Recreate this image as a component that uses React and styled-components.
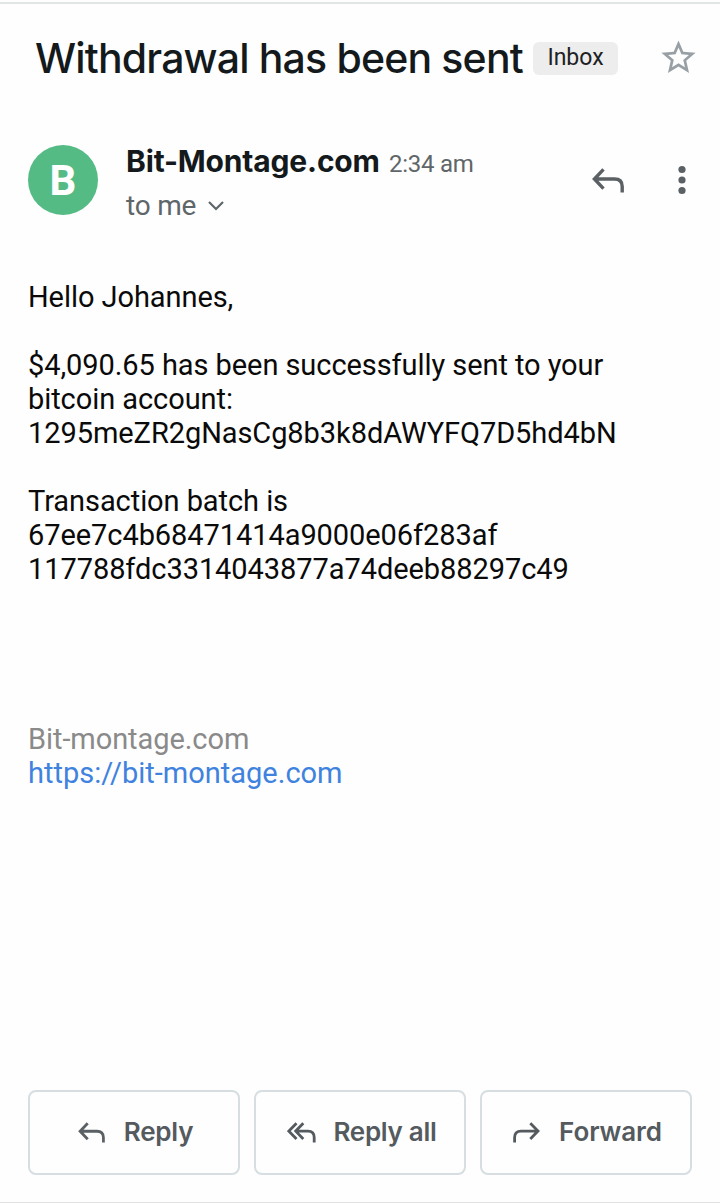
import styled, {createGlobalStyle} from "styled-components";
import {MdStarBorder} from "react-icons/md";

const GlobalStyle = createGlobalStyle`
    * {
        box-sizing: border-box;
    }

    body {
        margin: 0;
        background: #fefefe;
        font-family: Roboto, "Liberation Sans", sans-serif;
    }
`

const Page = styled.div`
    display: flex;
    flex-direction: column;
    height: 1203px;
    padding: 0 28px 27px;
    border-bottom: 1px solid #dfe1e2;
`

const TopLine = styled.hr`
    flex: none;
    height: 2px;
    margin: 2px -28px 0;
    border: 0;
    background: #e2e5e6;
`

const SubjectRow = styled.header`
    display: flex;
    align-items: center;
    height: 60px;
    margin-top: 24px;
    padding-left: 7px;
`

const Subject = styled.h1`
    flex: none;
    margin: 0;
    width: 498px;
    font: 500 41px/58px Inter, sans-serif;
    letter-spacing: -0.83px;
    white-space: nowrap;
    color: #14191c;
`

const Badge = styled.span`
    flex: none;
    width: 85px;
    height: 33px;
    margin-right: 40px;
    border-radius: 6px;
    background: #ededed;
    font-size: 23px;
    line-height: 32px;
    text-align: center;
    color: #202124;
`

const StarIcon = styled(MdStarBorder)`
    flex: none;
    width: 41px;
    height: 41px;
    margin-top: -1px;
    color: #98a0a5;
`

const SenderRow = styled.section`
    display: flex;
    align-items: center;
    height: 90px;
    margin-top: 47px;
`

const Avatar = styled.div`
    width: 70px;
    height: 70px;
    margin-right: 28px;
    border-radius: 50%;
    background: #54bb85;
    font: 700 42px/72px Roboto, sans-serif;
    text-align: center;
    color: #ffffff;
`

const SenderInfo = styled.div`
    flex: 1;
    padding-top: 6px;
`

const SenderLine = styled.div`
    display: flex;
    align-items: baseline;
    height: 45px;
    line-height: 44px;
    white-space: nowrap;
`

const SenderName = styled.span`
    width: 263px;
    font-family: Inter, sans-serif;
    font-size: 30px;
    font-weight: 650;
    letter-spacing: -0.17px;
    color: #14191c;
`

const Muted = styled.span`
    font-size: ${({$size}) => $size}px;
    letter-spacing: ${({$spacing}) => $spacing || 0}px;
    color: #5f6669;
`

const ToLine = styled(SenderLine)`
    align-items: center;
    gap: 12px;
    height: 44px;
`

const SenderActions = styled.div`
    display: flex;
    align-items: center;
    gap: 50px;
    padding-right: 2px;
`

const Message = styled.main`
    flex: 1;
    padding-top: 55px;
    font-size: 29px;
    line-height: 34px;
    letter-spacing: -0.07px;
    color: #0a0a0a;
`

const Paragraph = styled.p`
    margin: 0 0 34px;
    white-space: nowrap;
`

const Line = styled.span`
    display: block;
`

const Signature = styled.footer`
    padding-top: 102px;
    color: #8a8a8a;
`

const SignatureLink = styled.a`
    display: block;
    letter-spacing: 0;
    text-decoration: none;
    color: #3f83df;
`

const ButtonRow = styled.nav`
    display: grid;
    grid-template-columns: repeat(3, 1fr);
    gap: 14px;
`

const ActionButton = styled.button`
    display: flex;
    align-items: center;
    justify-content: center;
    gap: ${({$gap}) => $gap}px;
    height: 85px;
    padding: 0 0 2px 3px;
    border: 2px solid #d6dee1;
    border-radius: 8px;
    background: transparent;
    font: 600 26px Inter, sans-serif;
    letter-spacing: ${({$spacing}) => $spacing}px;
    white-space: nowrap;
    color: #545a5e;

    svg {
        margin-top: 2px;
    }
`

function ReplyIcon({width = 32, height = 25, stroke = 3.4}) {
    return <svg width={width} height={height} viewBox="0 0 32 25" fill="none" stroke="#5a6063" strokeWidth={stroke}>
        <path d="M11.5 1.4 L2.4 11 L11.5 20.6 M2.4 11 H22.5 Q30.2 11 30.2 18.5 V24.5" />
    </svg>
}

function ReplyAllIcon() {
    return <svg width="29" height="21" viewBox="0 0 29 21" fill="none" stroke="#545a5e" strokeWidth="2.8">
        <path d="M9.5 1.2 L1.9 9.1 L9.5 17 M16.3 1.2 L8.7 9.1 L16.3 17 M8.7 9.1 H21 Q27.2 9.1 27.2 15.5 V20.5" />
    </svg>
}

function ForwardIcon() {
    return <svg width="27" height="21" viewBox="0 0 27 21" fill="none" stroke="#545a5e" strokeWidth="2.8">
        <path d="M17.3 1.2 L25 9.1 L17.3 17 M25 9.1 H8 Q1.6 9.1 1.6 15.5 V20.5" />
    </svg>
}

function MoreIcon() {
    return <svg width="16" height="30" viewBox="0 0 16 30" fill="#5a6063">
        <circle cx="8" cy="4.5" r="3.6" />
        <circle cx="8" cy="15" r="3.6" />
        <circle cx="8" cy="25.5" r="3.6" />
    </svg>
}

function ChevronIcon() {
    return <svg width="16" height="11" viewBox="0 0 16 11" fill="none" stroke="#5f6669" strokeWidth="2.2">
        <path d="M1 2 L8 9 L15 2" />
    </svg>
}

export default function App() {
    return <>
        <GlobalStyle />
        <Page>
            <TopLine />
            <SubjectRow>
                <Subject>Withdrawal has been sent</Subject>
                <Badge>Inbox</Badge>
                <StarIcon />
            </SubjectRow>
            <SenderRow>
                <Avatar>B</Avatar>
                <SenderInfo>
                    <SenderLine>
                        <SenderName>Bit-Montage.com</SenderName>
                        <Muted $size={24} $spacing={-0.25}>2:34 am</Muted>
                    </SenderLine>
                    <ToLine>
                        <Muted $size={28} $spacing={-0.2}>to me</Muted>
                        <ChevronIcon />
                    </ToLine>
                </SenderInfo>
                <SenderActions>
                    <ReplyIcon />
                    <MoreIcon />
                </SenderActions>
            </SenderRow>
            <Message>
                <Paragraph>Hello Johannes,</Paragraph>
                <Paragraph>
                    <Line>$4,090.65 has been successfully sent to your</Line>
                    <Line>bitcoin account:</Line>
                    <Line>1295meZR2gNasCg8b3k8dAWYFQ7D5hd4bN</Line>
                </Paragraph>
                <Paragraph>
                    <Line>Transaction batch is</Line>
                    <Line>67ee7c4b68471414a9000e06f283af</Line>
                    <Line>117788fdc3314043877a74deeb88297c49</Line>
                </Paragraph>
                <Signature>
                    Bit-montage.com
                    <SignatureLink href="#">https://bit-montage.com</SignatureLink>
                </Signature>
            </Message>
            <ButtonRow>
                <ActionButton $gap={19} $spacing={-0.2}>
                    <ReplyIcon width={27} height={21} stroke={3.3} />
                    Reply
                </ActionButton>
                <ActionButton $gap={18} $spacing={-0.3}>
                    <ReplyAllIcon />
                    Reply all
                </ActionButton>
                <ActionButton $gap={19} $spacing={-0.1}>
                    <ForwardIcon />
                    Forward
                </ActionButton>
            </ButtonRow>
        </Page>
    </>
}
